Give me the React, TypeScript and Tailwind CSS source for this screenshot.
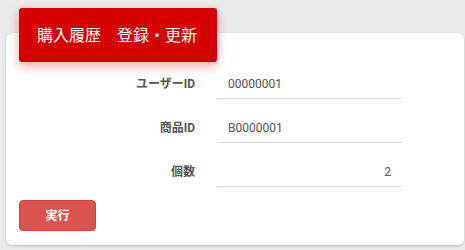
export default function App() {
  const rows = [
    { label: "ユーザーID", value: "00000001", right: false },
    { label: "商品ID", value: "B0000001", right: false },
    { label: "個数", value: "2", right: true },
  ];

  return (
    <div
      className="w-[465px] h-[250px] bg-[#ebebeb] overflow-hidden pl-[6px] pt-[33px]"
      style={{ fontFamily: "Roboto, 'Noto Sans CJK JP', sans-serif" }}
    >
      <div className="w-[458px] h-[212px] bg-white rounded-[6px] shadow-[0_1px_3px_rgba(0,0,0,0.2)] px-[13px] flex flex-col">
        <div className="-mt-[25px] w-[198px] h-[54px] bg-[#d50000] rounded-[3px] shadow-[0_4px_12px_rgba(213,0,0,0.35)] flex items-center pl-[18px] pt-[1px] text-white text-[16px] leading-none">
          購入履歴　登録・更新
        </div>

        <div className="mt-[7px] flex flex-col gap-[14px]">
          {rows.map((r) => (
            <div key={r.label} className="flex items-center">
              <div className="w-[176px] text-right text-[12px] font-bold text-[#555]">
                {r.label}
              </div>
              <div
                className={`ml-[22px] w-[185px] h-[30px] border-b border-[#d8d8d8] px-[11px] flex items-center text-[12px] text-[#555] ${
                  r.right ? "justify-end" : "justify-start"
                }`}
              >
                {r.value}
              </div>
            </div>
          ))}
        </div>

        <button className="mt-[13px] w-[77px] h-[31px] bg-[#d9534f] border border-[#d43f3a] rounded-[4px] text-white text-[12px] font-bold flex items-center justify-center">
          実行
        </button>
      </div>
    </div>
  );
}
